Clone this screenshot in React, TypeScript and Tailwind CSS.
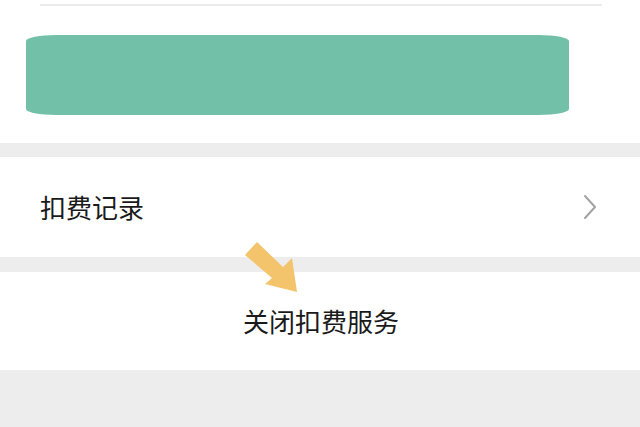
const Chevron = () => (
  <svg width="16" height="26" viewBox="0 0 16 26" fill="none">
    <polyline
      points="3,2 13,13 3,24"
      stroke="#a3a3a3"
      strokeWidth="2"
      strokeLinecap="round"
      strokeLinejoin="round"
    />
  </svg>
);

const Arrow = () => (
  <svg
    className="pointer-events-none absolute left-0 top-0"
    width="640"
    height="427"
    viewBox="0 0 640 427"
  >
    <polygon
      points="257,242 283,267 292,258 297,292 265,284 272,278 245,255"
      fill="#f4c46c"
    />
  </svg>
);

const App = () => {
  return (
    <div
      className="relative flex h-[427px] w-[640px] flex-col overflow-hidden bg-[#ededed] text-[#1a1a1a]"
      style={{ fontFamily: '"Noto Sans CJK SC", "Noto Sans", sans-serif' }}
    >
      <div className="flex h-[143px] flex-col bg-white">
        <div className="ml-[40px] mr-[38px] mt-[4px] h-[2px] bg-[#ebebeb]" />
        <button className="ml-[26px] mt-[29px] h-[80px] w-[543px] rounded-[30px/6px] bg-[#73c0a9]" />
      </div>

      <div className="mt-[14px] flex h-[100px] items-center justify-between bg-white pl-[40px] pr-[42px]">
        <span className="text-[26px] leading-none">扣费记录</span>
        <Chevron />
      </div>

      <div className="mt-[15px] flex h-[98px] items-center justify-center bg-white">
        <span className="pl-[2px] text-[26px] leading-none">关闭扣费服务</span>
      </div>

      <Arrow />
    </div>
  );
};

export default App;
